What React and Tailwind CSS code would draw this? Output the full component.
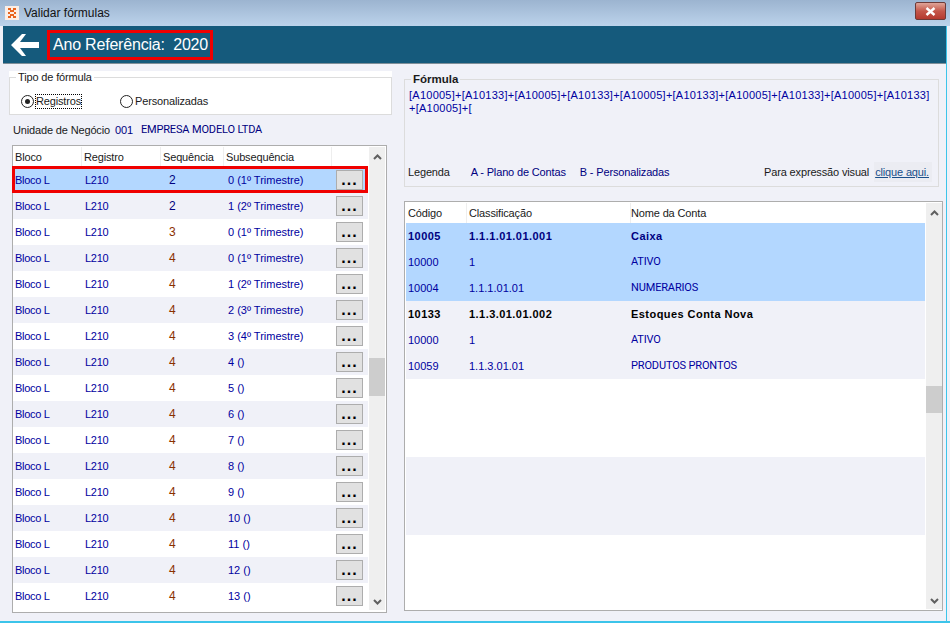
const LEFT_ROWS = [
  ['2', '0 (1º Trimestre)'],
  ['2', '1 (2º Trimestre)'],
  ['3', '0 (1º Trimestre)'],
  ['4', '0 (1º Trimestre)'],
  ['4', '1 (2º Trimestre)'],
  ['4', '2 (3º Trimestre)'],
  ['4', '3 (4º Trimestre)'],
  ['4', '4 ()'],
  ['4', '5 ()'],
  ['4', '6 ()'],
  ['4', '7 ()'],
  ['4', '8 ()'],
  ['4', '9 ()'],
  ['4', '10 ()'],
  ['4', '11 ()'],
  ['4', '12 ()'],
  ['4', '13 ()'],
]

const ACCOUNT_GROUPS = [
  {
    bg: 'bg-[#b3d7ff]',
    nameColor: 'text-[#000080]',
    rows: [
      ['10005', '1.1.1.01.01.001', 'Caixa', true],
      ['10000', '1', 'ATIVO'],
      ['10004', '1.1.1.01.01', 'NUMERARIOS'],
    ],
  },
  {
    bg: 'bg-[#f0f1f8]',
    nameColor: 'text-black',
    rows: [
      ['10133', '1.1.3.01.01.002', 'Estoques Conta Nova', true],
      ['10000', '1', 'ATIVO'],
      ['10059', '1.1.3.01.01', 'PRODUTOS PRONTOS'],
    ],
  },
]

function Chevron({ up }) {
  return (
    <svg width="9" height="6" viewBox="0 0 9 6" className="shrink-0">
      <path
        d={up ? 'M1 5 L4.5 1.5 L8 5' : 'M1 1 L4.5 4.5 L8 1'}
        fill="none"
        stroke="#606060"
        strokeWidth="2"
      />
    </svg>
  )
}

function Scrollbar({ thumbTop, thumbHeight }) {
  return (
    <div className="relative flex w-[16px] shrink-0 flex-col items-center justify-between bg-[#efefef] pt-[7px] pb-[5px]">
      <Chevron up />
      <div
        className="absolute left-0 w-full bg-[#cdcdcd]"
        style={{ top: thumbTop, height: thumbHeight }}
      />
      <Chevron />
    </div>
  )
}

function Radio({ checked, label, focused, className }) {
  return (
    <div className={`flex items-center gap-[2px] ${className}`}>
      <span className="flex h-[13px] w-[13px] items-center justify-center rounded-full border border-[#222] bg-white">
        {checked && <span className="h-[5px] w-[5px] rounded-full bg-[#222]" />}
      </span>
      <span className={focused ? 'outline-1 outline-dotted outline-black leading-[13px]' : 'leading-[13px]'}>
        {label}
      </span>
    </div>
  )
}

function LeftRow({ seq, sub, index }) {
  const selected = index === 0
  const rowBg = selected ? 'bg-[#b3d7ff]' : index % 2 === 1 ? 'bg-[#f0f1f8]' : 'bg-white'
  const seqColor = index === 0 || index === 1 ? 'text-[#000080]' : 'text-[#8a3000]'
  return (
    <div className={`relative flex h-[26px] items-center text-[#0000a0] ${rowBg}`}>
      <span className="w-[69px] pl-[2px] tracking-[-0.3px]">Bloco L</span>
      <span className="w-[79px] pl-[3px] tracking-[-0.3px]">L210</span>
      <span className={`w-[63px] pl-[8px] text-[12px] ${seqColor}`}>{seq}</span>
      <span className="w-[112px] pl-[4px] tracking-normal whitespace-nowrap">{sub}</span>
      <button className="flex h-[20px] w-[27px] shrink-0 items-end justify-center border border-[#adadad] bg-[#e1e1e1] pb-[3px] text-[16px] leading-[13px] font-bold tracking-[1px] text-black">
        ...
      </button>
      {selected && (
        <div className="pointer-events-none absolute -top-[1px] right-0 bottom-0 -left-[1px] border-[3px] border-[#f00000]" />
      )}
    </div>
  )
}

function AccountRow({ row, nameColor }) {
  const [code, classification, name, bold] = row
  return (
    <div
      className={`flex h-[26px] items-center ${bold ? `font-bold tracking-[0.45px] ${nameColor}` : 'tracking-normal text-[#0000a0]'}`}
    >
      <span className="w-[61px] pl-[2px]">{code}</span>
      <span className="w-[164px] pl-[2px]">{classification}</span>
      <span className={bold ? '' : 'tracking-[-0.15px] [font-family:Roboto]'}>{name}</span>
    </div>
  )
}

export default function App() {
  return (
    <div
      className="flex h-[623px] w-[950px] flex-col overflow-hidden border-b-2 border-b-[#3cc4ea] bg-[#f0f1f8] text-[11px] tracking-[-0.15px] text-[#1a1a1a]"
      style={{ fontFamily: '"Liberation Sans", Arial, sans-serif' }}
    >
      {/* title bar */}
      <div className="flex h-[26px] shrink-0 items-center bg-gradient-to-b from-[#9cb4d0] to-[#bcd3eb] pr-[4px] pl-[5px]">
        <svg width="14" height="14" viewBox="0 0 14 14" className="mr-[5px]">
          <rect width="14" height="14" fill="#fbeee6" />
          <path d="M3 2h3v2H3zM8 2h3v2H8zM5 4h4v2H5zM3 6h2v2H3zM9 6h2v2H9zM5 8h4v2H5zM3 10h3v2H3zM8 10h3v2H8z" fill="#e8641e" />
        </svg>
        <span className="text-[12px] tracking-normal text-[#111]">Validar fórmulas</span>
        <button className="mt-[-4px] ml-auto flex h-[18px] w-[31px] items-center justify-center rounded-[2px] border border-[#6d3b38] bg-gradient-to-b from-[#dfa498] via-[#c4574a] to-[#b5392f]">
          <svg width="11" height="9" viewBox="0 0 11 9">
            <path d="M1.5 1 L9.5 8 M9.5 1 L1.5 8" stroke="#fff" strokeWidth="2.4" />
          </svg>
        </button>
      </div>

      {/* main frame */}
      <div className="mx-[3px] flex min-h-0 flex-1 flex-col border-r border-r-[#3cc4ea]">
        <div className="flex h-[38px] shrink-0 items-center border-b border-b-[#7f8f99] bg-[#155a7c] pl-[8px]">
          <svg width="28" height="22" viewBox="0 0 28 22">
            <path d="M0 11 L11 0 H15 L9 8 H28 V14 H9 L15 22 H11 Z" fill="#fff" />
          </svg>
          <div className="ml-[8px] flex h-[30px] w-[166px] items-center border-[3px] border-[#f00000] pl-[3px] text-[16px] tracking-[-0.2px] whitespace-nowrap text-white">
            Ano Referência:&nbsp; 2020
          </div>
        </div>

        <div className="flex min-h-0 flex-1 pt-[7px] pl-[6px]">
          {/* left column */}
          <div className="flex w-[395px] shrink-0 flex-col">
            <div className="ml-0 w-[383px] bg-white">
              <fieldset className="h-[44px] border border-[#dcdcdc] pl-[8px]">
                <legend className="ml-[-2px] px-[2px] text-[11px] leading-[12px]">Tipo de fórmula</legend>
                <div className="flex pt-[12px]">
                  <Radio checked focused label="Registros" className="ml-[3px] w-[99px]" />
                  <Radio label="Personalizadas" />
                </div>
              </fieldset>
            </div>

            <div className="mt-[7px] flex h-[16px] items-center pl-[4px]">
              <span>Unidade de Negócio</span>
              <span className="ml-[5px] text-[#000080]">001</span>
              <span className="ml-[8px] tracking-[-0.15px] text-[#000080] [font-family:Roboto]">EMPRESA MODELO LTDA</span>
            </div>

            <div className="mt-[7px] ml-[3px] flex h-[468px] w-[375px] border border-[#adadad] bg-white pt-[1px]">
              <div className="w-[355px] shrink-0">
                <div className="flex h-[20px] items-center text-[#1a1a1a]">
                  <span className="h-full w-[69px] border-r border-r-[#eeeeee] pl-[2px] leading-[20px]">Bloco</span>
                  <span className="h-full w-[79px] border-r border-r-[#eeeeee] pl-[2px] leading-[20px]">Registro</span>
                  <span className="h-full w-[63px] border-r border-r-[#eeeeee] pl-[2px] leading-[20px]">Sequência</span>
                  <span className="h-full w-[108px] border-r border-r-[#eeeeee] pl-[2px] leading-[20px]">Subsequência</span>
                </div>
                {LEFT_ROWS.map((row, index) => (
                  <LeftRow key={index} seq={row[0]} sub={row[1]} index={index} />
                ))}
              </div>
              <div className="ml-[1px] flex pb-[2px]">
                <Scrollbar thumbTop={211} thumbHeight={38} />
              </div>
            </div>
          </div>

          {/* right column */}
          <div className="flex w-[539px] shrink-0 flex-col">
            <fieldset className="mt-[1px] h-[115px] w-[535px] border border-[#dcdcdc] px-[4px]">
              <legend className="ml-[2px] px-[2px] text-[11.5px] leading-[14px] font-bold tracking-normal">Fórmula</legend>
              <div className="flex h-[96px] flex-col">
                <p className="pt-[3px] text-[11px] leading-[13px] tracking-[0.25px] whitespace-nowrap text-[#0000a0]">
                  [A10005]+[A10133]+[A10005]+[A10133]+[A10005]+[A10133]+[A10005]+[A10133]+[A10005]+[A10133]
                  <br />
                  +[A10005]+[
                </p>
                <div className="mt-auto flex h-[20px] items-center">
                  <span className="ml-[-1px]">Legenda</span>
                  <span className="ml-[21px] text-[#000080]">A - Plano de Contas</span>
                  <span className="ml-[14px] text-[#000080]">B - Personalizadas</span>
                  <span className="ml-auto">Para expressão visual</span>
                  <span className="mr-[2px] ml-[5px] bg-[#ebecf2] pr-[3px] pl-[1px] leading-[20px] text-[#1a4f8a] underline">clique aqui.</span>
                </div>
              </div>
            </fieldset>

            <div className="mt-[14px] flex h-[410px] w-[539px] border border-[#adadad] bg-white p-[1px]">
              <div className="w-[519px] shrink-0">
                <div className="flex h-[20px] items-center">
                  <span className="h-full w-[61px] border-r border-r-[#eeeeee] pl-[2px] leading-[20px]">Código</span>
                  <span className="h-full w-[164px] border-r border-r-[#eeeeee] pl-[2px] leading-[20px]">Classificação</span>
                  <span className="h-full leading-[20px]">Nome da Conta</span>
                </div>
                {ACCOUNT_GROUPS.map((group, g) => (
                  <div key={g} className={group.bg}>
                    {group.rows.map((row, r) => (
                      <AccountRow key={r} row={row} nameColor={group.nameColor} />
                    ))}
                  </div>
                ))}
                <div className="h-[78px] bg-white" />
                <div className="h-[78px] bg-[#f0f1f8]" />
              </div>
              <div className="ml-[1px] flex">
                <Scrollbar thumbTop={183} thumbHeight={27} />
              </div>
            </div>
          </div>
        </div>
      </div>
    </div>
  )
}
